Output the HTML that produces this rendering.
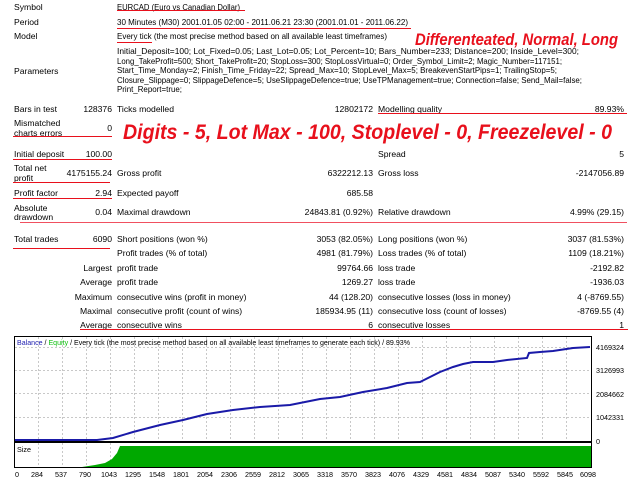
<!DOCTYPE html>
<html><head><meta charset="utf-8"><style>
html,body{margin:0;padding:0;background:#fff;width:640px;height:480px;overflow:hidden}
svg{display:block}
text{font-family:"Liberation Sans",sans-serif;font-size:8.6px;fill:#000}
.r{text-anchor:end}
.big{font-weight:bold;font-style:italic;fill:#e8101c}
.ax{font-size:7.2px}
</style></head><body>
<svg width="640" height="480" viewBox="0 0 640 480">
<text x="14" y="10">Symbol</text>
<text x="117" y="10" textLength="123" lengthAdjust="spacingAndGlyphs">EURCAD (Euro vs Canadian Dollar)</text>
<text x="14" y="25">Period</text>
<text x="117" y="25" textLength="291" lengthAdjust="spacingAndGlyphs">30 Minutes (M30) 2001.01.05 02:00 - 2011.06.21 23:30 (2001.01.01 - 2011.06.22)</text>
<text x="14" y="39">Model</text>
<text x="117" y="39" textLength="270" lengthAdjust="spacingAndGlyphs">Every tick (the most precise method based on all available least timeframes)</text>
<text x="14" y="74">Parameters</text>
<text x="117" y="54" textLength="462" lengthAdjust="spacingAndGlyphs">Initial_Deposit=100; Lot_Fixed=0.05; Last_Lot=0.05; Lot_Percent=10; Bars_Number=233; Distance=200; Inside_Level=300;</text>
<text x="117" y="64" textLength="445" lengthAdjust="spacingAndGlyphs">Long_TakeProfit=500; Short_TakeProfit=20; StopLoss=300; StopLossVirtual=0; Order_Symbol_Limit=2; Magic_Number=117151;</text>
<text x="117" y="73" textLength="440" lengthAdjust="spacingAndGlyphs">Start_Time_Monday=2; Finish_Time_Friday=22; Spread_Max=10; StopLevel_Max=5; BreakevenStartPips=1; TrailingStop=5;</text>
<text x="117" y="83" textLength="465" lengthAdjust="spacingAndGlyphs">Closure_Slippage=0; SlippageDefence=5; UseSlippageDefence=true; UseTPManagement=true; Connection=false; Send_Mail=false;</text>
<text x="117" y="92" textLength="65" lengthAdjust="spacingAndGlyphs">Print_Report=true;</text>

<text x="14" y="112">Bars in test</text><text class="r" x="112" y="112">128376</text>
<text x="117" y="112">Ticks modelled</text><text class="r" x="373" y="112">12802172</text>
<text x="378" y="112">Modelling quality</text><text class="r" x="624" y="112">89.93%</text>
<text x="14" y="126">Mismatched</text><text x="14" y="136">charts errors</text><text class="r" x="112" y="131">0</text>

<text x="14" y="157">Initial deposit</text><text class="r" x="112" y="157">100.00</text>
<text x="378" y="157">Spread</text><text class="r" x="624" y="157">5</text>

<text x="14" y="171">Total net</text><text x="14" y="181">profit</text><text class="r" x="112" y="176">4175155.24</text>
<text x="117" y="176">Gross profit</text><text class="r" x="373" y="176">6322212.13</text>
<text x="378" y="176">Gross loss</text><text class="r" x="624" y="176">-2147056.89</text>

<text x="14" y="196">Profit factor</text><text class="r" x="112" y="196">2.94</text>
<text x="117" y="196">Expected payoff</text><text class="r" x="373" y="196">685.58</text>

<text x="14" y="211">Absolute</text><text x="14" y="220">drawdown</text><text class="r" x="112" y="215">0.04</text>
<text x="117" y="215">Maximal drawdown</text><text class="r" x="373" y="215">24843.81 (0.92%)</text>
<text x="378" y="215">Relative drawdown</text><text class="r" x="624" y="215">4.99% (29.15)</text>

<text x="14" y="242">Total trades</text><text class="r" x="112" y="242">6090</text>
<text x="117" y="242">Short positions (won %)</text><text class="r" x="373" y="242">3053 (82.05%)</text>
<text x="378" y="242">Long positions (won %)</text><text class="r" x="624" y="242">3037 (81.53%)</text>

<text x="117" y="256">Profit trades (% of total)</text><text class="r" x="373" y="256">4981 (81.79%)</text>
<text x="378" y="256">Loss trades (% of total)</text><text class="r" x="624" y="256">1109 (18.21%)</text>

<text class="r" x="112" y="271">Largest</text><text x="117" y="271">profit trade</text><text class="r" x="373" y="271">99764.66</text>
<text x="378" y="271">loss trade</text><text class="r" x="624" y="271">-2192.82</text>

<text class="r" x="112" y="285">Average</text><text x="117" y="285">profit trade</text><text class="r" x="373" y="285">1269.27</text>
<text x="378" y="285">loss trade</text><text class="r" x="624" y="285">-1936.03</text>

<text class="r" x="112" y="300">Maximum</text><text x="117" y="300">consecutive wins (profit in money)</text><text class="r" x="373" y="300">44 (128.20)</text>
<text x="378" y="300">consecutive losses (loss in money)</text><text class="r" x="624" y="300">4 (-8769.55)</text>

<text class="r" x="112" y="314">Maximal</text><text x="117" y="314">consecutive profit (count of wins)</text><text class="r" x="373" y="314">185934.95 (11)</text>
<text x="378" y="314">consecutive loss (count of losses)</text><text class="r" x="624" y="314">-8769.55 (4)</text>

<text class="r" x="112" y="328">Average</text><text x="117" y="328">consecutive wins</text><text class="r" x="373" y="328">6</text>
<text x="378" y="328">consecutive losses</text><text class="r" x="624" y="328">1</text>

<g stroke="#e8101c" stroke-width="1">
<line x1="117" y1="10.5" x2="245" y2="10.5"/>
<line x1="117" y1="28.5" x2="411" y2="28.5"/>
<line x1="117" y1="42.5" x2="152" y2="42.5"/>
<line x1="378" y1="113.5" x2="627" y2="113.5"/>
<line x1="13" y1="136.5" x2="112" y2="136.5"/>
<line x1="13" y1="159.5" x2="112" y2="159.5"/>
<line x1="13" y1="182.5" x2="110" y2="182.5"/>
<line x1="13" y1="198.5" x2="112" y2="198.5"/>
<line x1="20" y1="222.5" x2="627" y2="222.5" stroke="#f05060"/>
<line x1="13" y1="248.5" x2="110" y2="248.5"/>
<line x1="80" y1="329.5" x2="628" y2="329.5"/>
</g>

<text class="big" x="415" y="45" textLength="203" lengthAdjust="spacingAndGlyphs" style="font-size:17px">Differenteated, Normal, Long</text>
<text class="big" x="123" y="139" textLength="489" lengthAdjust="spacingAndGlyphs" style="font-size:21px">Digits - 5, Lot Max - 100, Stoplevel - 0, Freezelevel - 0</text>

<rect x="14.5" y="336.5" width="577" height="105" fill="#fff" stroke="#000"/>
<rect x="14.5" y="442.5" width="577" height="25" fill="#fff" stroke="#000"/>
<g stroke="#c8c8c8" stroke-dasharray="2,2" stroke-width="1">
<line x1="15" y1="370.5" x2="591" y2="370.5"/>
<line x1="15" y1="393.5" x2="591" y2="393.5"/>
<line x1="15" y1="417.5" x2="591" y2="417.5"/>
<line x1="15" y1="347.5" x2="591" y2="347.5"/>
</g>
<g stroke="#c8c8c8" stroke-dasharray="2,2">
<line x1="38.5" y1="337" x2="38.5" y2="441"/><line x1="62.5" y1="337" x2="62.5" y2="441"/>
<line x1="86.5" y1="337" x2="86.5" y2="441"/><line x1="110.5" y1="337" x2="110.5" y2="441"/>
<line x1="134.5" y1="337" x2="134.5" y2="441"/><line x1="158.5" y1="337" x2="158.5" y2="441"/>
<line x1="182.5" y1="337" x2="182.5" y2="441"/><line x1="206.5" y1="337" x2="206.5" y2="441"/>
<line x1="230.5" y1="337" x2="230.5" y2="441"/><line x1="254.5" y1="337" x2="254.5" y2="441"/>
<line x1="278.5" y1="337" x2="278.5" y2="441"/><line x1="302.5" y1="337" x2="302.5" y2="441"/>
<line x1="326.5" y1="337" x2="326.5" y2="441"/><line x1="350.5" y1="337" x2="350.5" y2="441"/>
<line x1="374.5" y1="337" x2="374.5" y2="441"/><line x1="398.5" y1="337" x2="398.5" y2="441"/>
<line x1="422.5" y1="337" x2="422.5" y2="441"/><line x1="446.5" y1="337" x2="446.5" y2="441"/>
<line x1="470.5" y1="337" x2="470.5" y2="441"/><line x1="494.5" y1="337" x2="494.5" y2="441"/>
<line x1="518.5" y1="337" x2="518.5" y2="441"/><line x1="542.5" y1="337" x2="542.5" y2="441"/>
<line x1="566.5" y1="337" x2="566.5" y2="441"/>
<line x1="38.5" y1="443" x2="38.5" y2="467"/><line x1="62.5" y1="443" x2="62.5" y2="467"/>
<line x1="86.5" y1="443" x2="86.5" y2="467"/><line x1="110.5" y1="443" x2="110.5" y2="467"/>
</g>
<polyline fill="none" stroke="#1a1aa8" stroke-width="2" points="15,440 97,440 113,438 133,432 160,425 183,420 207,414 233,410 260,407 290,405 320,399 340,397 363,392 387,388 407,383 420,382 440,372 453,367 463,364 473,362 493,362 507,360 527,358 529,353 540,352 553,351 573,348 590,347"/>
<polygon fill="#00a800" points="82,467 95,465 105,463 112,459 117,453 120,446 591,446 591,467"/>
<text x="17" y="345" class="ax" textLength="393" lengthAdjust="spacingAndGlyphs"><tspan fill="#2020b0">Balance</tspan> / <tspan fill="#10c010">Equity</tspan> / Every tick (the most precise method based on all available least timeframes to generate each tick) / 89.93%</text>
<text x="17" y="452" class="ax">Size</text>
<g class="ax">
<text x="596" y="350" class="ax">4169324</text><text x="596" y="373" class="ax">3126993</text>
<text x="596" y="397" class="ax">2084662</text><text x="596" y="420" class="ax">1042331</text><text x="596" y="444" class="ax">0</text>
</g>
<g text-anchor="middle">
<text class="ax" x="17" y="477">0</text><text class="ax" x="37" y="477">284</text><text class="ax" x="61" y="477">537</text><text class="ax" x="85" y="477">790</text>
<text class="ax" x="109" y="477">1043</text><text class="ax" x="133" y="477">1295</text><text class="ax" x="157" y="477">1548</text><text class="ax" x="181" y="477">1801</text>
<text class="ax" x="205" y="477">2054</text><text class="ax" x="229" y="477">2306</text><text class="ax" x="253" y="477">2559</text><text class="ax" x="277" y="477">2812</text>
<text class="ax" x="301" y="477">3065</text><text class="ax" x="325" y="477">3318</text><text class="ax" x="349" y="477">3570</text><text class="ax" x="373" y="477">3823</text>
<text class="ax" x="397" y="477">4076</text><text class="ax" x="421" y="477">4329</text><text class="ax" x="445" y="477">4581</text><text class="ax" x="469" y="477">4834</text>
<text class="ax" x="493" y="477">5087</text><text class="ax" x="517" y="477">5340</text><text class="ax" x="541" y="477">5592</text><text class="ax" x="565" y="477">5845</text>
<text class="ax" x="588" y="477">6098</text>
</g>
</svg>
</body></html>
